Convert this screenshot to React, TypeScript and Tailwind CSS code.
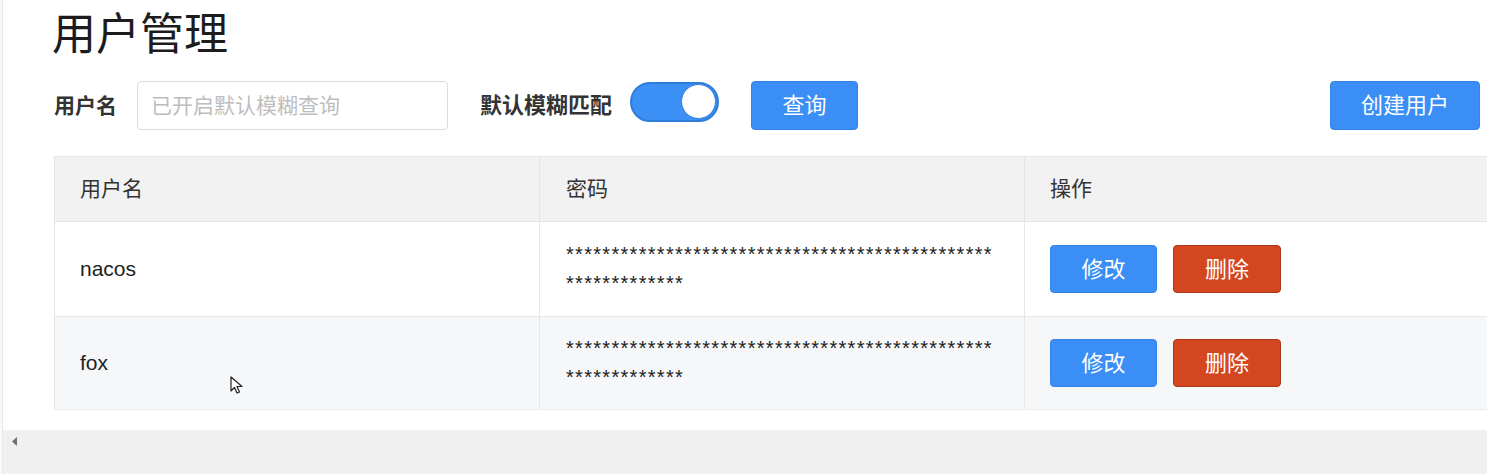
import React from 'react'

const cjk = "font-['Liberation_Sans','Noto_Sans_CJK_SC',sans-serif]"

const users = [
  { name: 'nacos', password: '*'.repeat(60), hover: false },
  { name: 'fox', password: '*'.repeat(60), hover: true },
]

export default function App() {
  return (
    <div className={`relative flex h-[474px] w-[1487px] overflow-hidden bg-white text-[#333] ${cjk}`}>
      {/* left frame edge */}
      <div className="w-[3px] shrink-0 border-r border-[#e6e6e6] bg-[#f7f9fc]" />

      <div className="flex min-w-0 flex-1 flex-col">
        <div className="pl-[51px]">
          <h1 className="-ml-[2px] pt-[12px] text-[44px] font-normal leading-[46px] text-[#1c1c1c]">用户管理</h1>

          {/* filters */}
          <div className="mt-[23px] flex h-[49px] items-center pr-[7px]">
            <span className="text-[21px] font-bold text-[#333]">用户名</span>
            <div className="ml-[20px] flex h-[49px] w-[311px] items-center rounded-[4px] border border-[#dcdcdc] px-[13px] text-[21px] text-[#bdbdbd]">
              已开启默认模糊查询
            </div>
            <span className="ml-[32px] text-[22px] font-bold text-[#333]">默认模糊匹配</span>
            <div className="ml-[18px] mb-[8px] flex h-[40px] w-[89px] items-center justify-end rounded-full border-2 border-[#2f7ddb] bg-[#3b8ff5] p-[1px]">
              <div className="h-[35px] w-[35px] rounded-full border border-[#2f7ddb] bg-white" />
            </div>
            <button className="ml-[32px] flex h-[49px] w-[107px] items-center justify-center rounded-[4px] border border-[#3383e8] bg-[#3a8ef6] text-[22px] text-white">
              查询
            </button>
            <button className="ml-auto flex h-[49px] w-[150px] items-center justify-center rounded-[4px] border border-[#3383e8] bg-[#3a8ef6] text-[22px] text-white">
              创建用户
            </button>
          </div>

          {/* table */}
          <div className="mt-[26px] border-l border-t border-[#e6e6e6]">
            <div className="grid h-[65px] grid-cols-[485px_485px_1fr] border-b border-[#e6e6e6] bg-[#f2f2f2] text-[21px] text-[#333]">
              <div className="flex items-center border-r border-[#e6e6e6] pl-[25px]">用户名</div>
              <div className="flex items-center border-r border-[#e6e6e6] pl-[26px]">密码</div>
              <div className="flex items-center pl-[25px]">操作</div>
            </div>
            {users.map((u, i) => (
              <div
                key={u.name}
                className={`grid grid-cols-[485px_485px_1fr] ${i === 0 ? 'h-[95px] border-b border-[#e8e8e8] bg-white' : 'h-[93px] border-b border-[#ececec] bg-[#f5f7f9]'}`}
              >
                <div className="flex items-center border-r border-[#e6e6e6] pl-[25px] text-[21px] text-[#222]">{u.name}</div>
                <div className="flex items-center border-r border-[#e6e6e6] pl-[26px]">
                  <div className="w-[434px] break-all text-[20px] leading-[29px] tracking-[1.3px] text-[#222]">{u.password}</div>
                </div>
                <div className="flex items-center gap-[16px] pl-[25px]">
                  <button className="flex h-[48px] w-[107px] items-center justify-center rounded-[4px] border border-[#3383e8] bg-[#3a8ef6] text-[22px] text-white">
                    修改
                  </button>
                  <button className="flex h-[48px] w-[108px] items-center justify-center rounded-[4px] border border-[#a8381a] bg-[#d4461f] text-[22px] text-white">
                    删除
                  </button>
                </div>
              </div>
            ))}
          </div>
        </div>

        {/* horizontal scrollbar */}
        <div className="mt-auto flex h-[44px] items-start bg-[#f0f0f0] pl-[9px] pt-[7px]">
          <svg width="6" height="9" viewBox="0 0 6 9">
            <path d="M5 0 L0 4.5 L5 9 Z" fill="#707070" />
          </svg>
        </div>
      </div>

      {/* mouse pointer */}
      <svg className="absolute left-[230px] top-[376px]" width="14" height="20" viewBox="0 0 14 20">
        <path d="M1 1 L1 15 L4.5 11.5 L7 17 L9.5 16 L7 10.5 L12 10.5 Z" fill="white" stroke="#222" strokeWidth="1.2" strokeLinejoin="round" />
      </svg>
    </div>
  )
}
